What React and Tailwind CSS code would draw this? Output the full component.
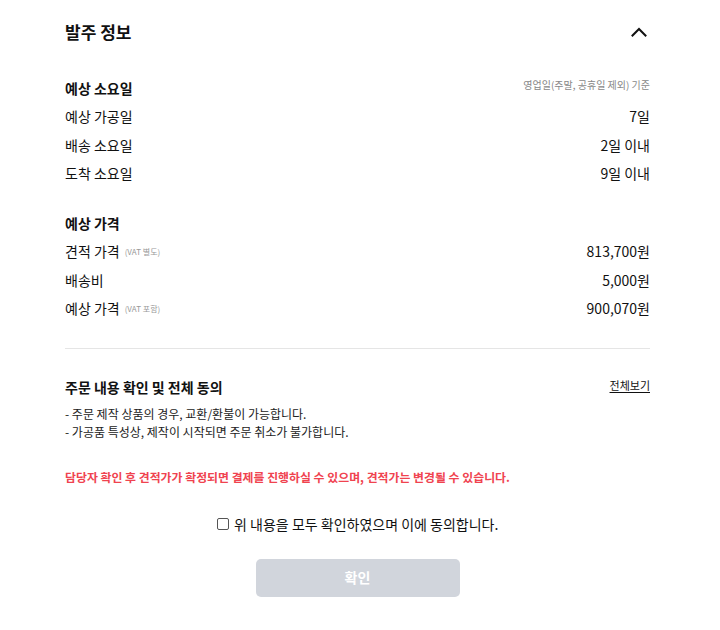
import React from "react";

const font = { fontFamily: '"Noto Sans CJK KR", "Noto Sans", sans-serif' };

function Row({ label, sub, value }) {
  return (
    <div className="flex h-[28.5px] items-center justify-between text-[14px] text-[#111111]">
      <div className="flex items-center">
        <span>{label}</span>
        {sub && <span className="ml-[5px] text-[8px] text-[#999999]">{sub}</span>}
      </div>
      <span>{value}</span>
    </div>
  );
}

export default function App() {
  return (
    <div className="min-h-[630px] w-[720px] bg-white" style={font}>
      <div className="ml-[65px] w-[585px]">
        <div className="flex h-[64px] items-center justify-between">
          <span className="text-[17px] font-semibold text-[#111111]">발주 정보</span>
          <svg width="16" height="10" viewBox="0 0 16 10" className="mr-[3px]" fill="none">
            <path d="M1.5 8.5 L8 2 L14.5 8.5" stroke="#111" strokeWidth="2" strokeLinecap="square" />
          </svg>
        </div>

        <div className="mt-[10px] flex flex-col">
          <div className="flex h-[28.5px] items-center justify-between">
            <span className="text-[14px] font-bold text-[#111111]">예상 소요일</span>
            <span className="-mt-[8px] text-[10px] text-[#888888]">영업일(주말, 공휴일 제외) 기준</span>
          </div>
          <Row label="예상 가공일" value="7일" />
          <Row label="배송 소요일" value="2일 이내" />
          <Row label="도착 소요일" value="9일 이내" />
        </div>

        <div className="mt-[21px] flex flex-col">
          <div className="flex h-[28.5px] items-center">
            <span className="text-[14px] font-bold text-[#111111]">예상 가격</span>
          </div>
          <Row label="견적 가격" sub="(VAT 별도)" value="813,700원" />
          <Row label="배송비" value="5,000원" />
          <Row label="예상 가격" sub="(VAT 포함)" value="900,070원" />
        </div>

        <div className="mt-[25px] h-px bg-[#e5e5e5]" />

        <div className="mt-[27px] flex h-[22px] items-center justify-between">
          <span className="text-[14px] font-bold text-[#111111]">주문 내용 확인 및 전체 동의</span>
          <span className="-mt-[4px] text-[11px] text-[#111111] underline underline-offset-2">전체보기</span>
        </div>
        <div className="mt-[6.5px] flex flex-col text-[12px] leading-[18.5px] text-[#222222]">
          <span>- 주문 제작 상품의 경우, 교환/환불이 가능합니다.</span>
          <span>- 가공품 특성상, 제작이 시작되면 주문 취소가 불가합니다.</span>
        </div>
        <div className="mt-[26px] text-[11.9px] font-semibold leading-[18px] text-[#f0434f]">
          담당자 확인 후 견적가가 확정되면 결제를 진행하실 수 있으며, 견적가는 변경될 수 있습니다.
        </div>

        <div className="mt-[28px] flex items-center justify-center">
          <label className="flex items-center gap-[5px] text-[14px] text-[#111111]">
            <span className="block h-[12.5px] w-[12.5px] rounded-[2px] border border-[#555555] bg-white" />
            <span>위 내용을 모두 확인하였으며 이에 동의합니다.</span>
          </label>
        </div>

        <div className="mt-[24px] flex justify-center">
          <button className="h-[38px] w-[204px] rounded-[5px] bg-[#d1d5dc] text-[14px] font-bold text-white">
            확인
          </button>
        </div>
      </div>
    </div>
  );
}
